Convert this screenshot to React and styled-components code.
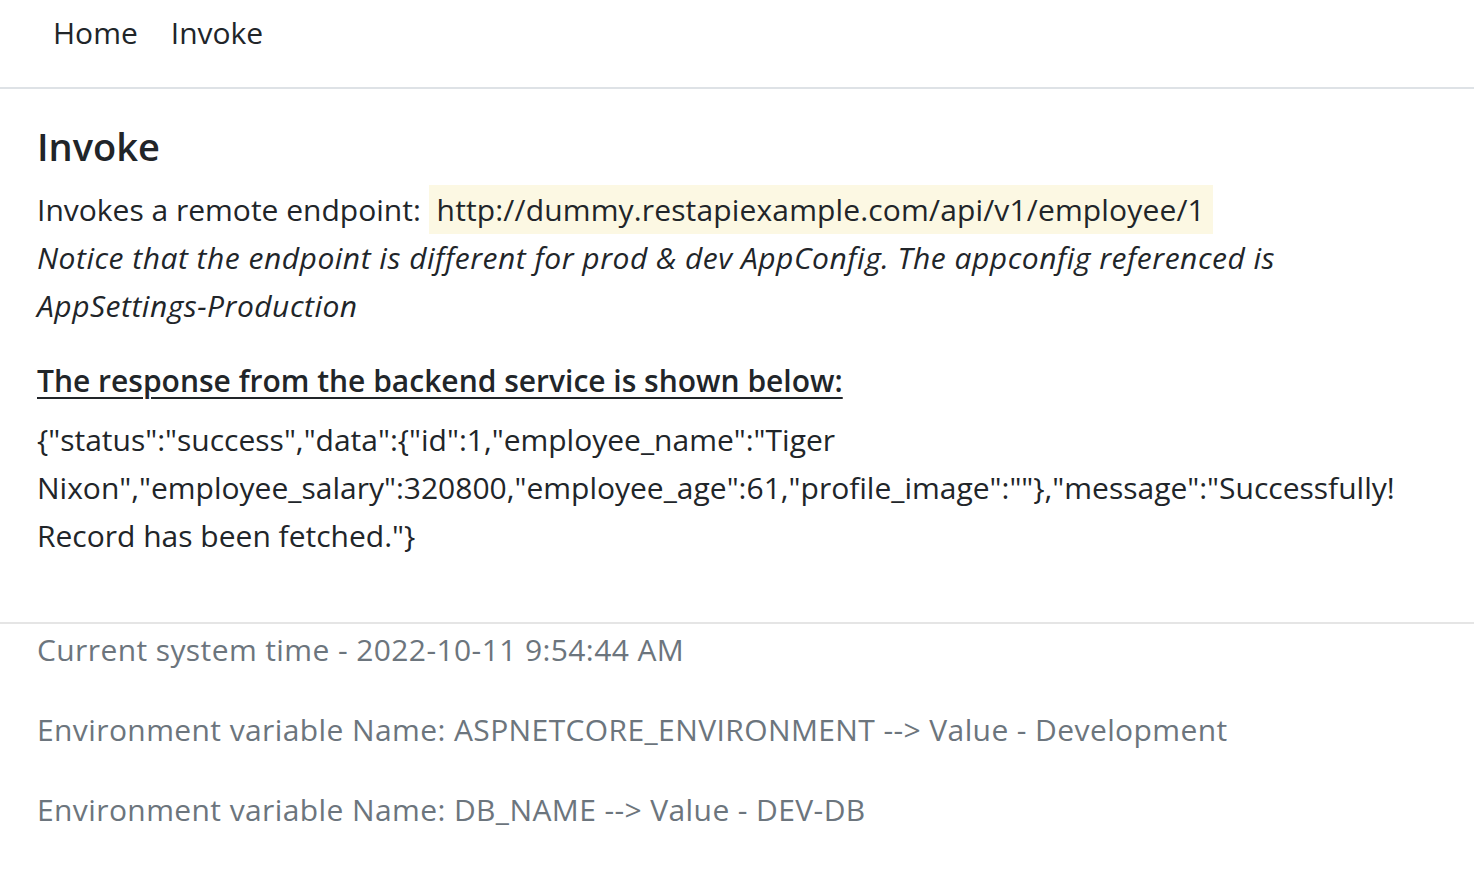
import React from 'react';
import styled, { createGlobalStyle } from 'styled-components';

const GlobalStyle = createGlobalStyle`
  html, body {
    margin: 0;
    padding: 0;
    background: #fff;
  }
  body {
    font-family: "Open Sans", "Noto Sans", sans-serif;
    font-size: 30px;
    line-height: 48px;
    color: #212529;
  }
`;

const Nav = styled.header`
  height: 89px;
  border-bottom: 2px solid #dee2e6;
  display: flex;
  align-items: flex-start;
  padding: 9px 0 0 53px;
  box-sizing: border-box;
  gap: 33px;
`;

const NavLink = styled.a`
  color: #212529;
  text-decoration: none;
  font-size: 30px;
  line-height: 48px;
`;

const Main = styled.main`
  padding: 30px 37px 62px;
`;

const Title = styled.h4`
  margin: 0 0 13px;
  font-size: 38px;
  font-weight: 600;
  line-height: 54px;
`;

const Para = styled.p`
  margin: 0 0 27px;
`;

const Mark = styled.mark`
  background: #fcf8e3;
  color: #212529;
  padding: 4px 8px;
  letter-spacing: 0.15px;
`;

const Note = styled.em`
  font-style: italic;
  letter-spacing: 0.5px;
`;

const NoWrap = styled.span`
  white-space: nowrap;
`;

const Subhead = styled.h6`
  margin: 0 0 11px;
  font-size: 30px;
  font-weight: 600;
  line-height: 48px;
  text-decoration: underline;
  text-decoration-thickness: 2px;
  text-underline-offset: 5px;
`;

const Response = styled.div`
  word-break: normal;
`;

const Footer = styled.footer`
  border-top: 2px solid #e5e5e5;
  padding: 2px 37px 0;
  color: #6c757d;
  letter-spacing: 0.4px;
  display: flex;
  flex-direction: column;
  gap: 32px;
`;

const FooterLine = styled.div``;

export default function App() {
  return (
    <>
      <GlobalStyle />
      <Nav>
        <NavLink href="#">Home</NavLink>
        <NavLink href="#">Invoke</NavLink>
      </Nav>
      <Main>
        <Title>Invoke</Title>
        <Para>
          Invokes a remote endpoint: <Mark>http://dummy.restapiexample.com/api/v1/employee/1</Mark>
          <br />
          <Note>
            Notice that the endpoint is different for prod &amp; dev AppConfig. The appconfig referenced is{' '}
            <NoWrap>AppSettings-Production</NoWrap>
          </Note>
        </Para>
        <Subhead>The response from the backend service is shown below:</Subhead>
        <Response>
          {'{"status":"success","data":{"id":1,"employee_name":"Tiger Nixon","employee_salary":320800,"employee_age":61,"profile_image":""},"message":"Successfully! Record has been fetched."}'}
        </Response>
      </Main>
      <Footer>
        <FooterLine>Current system time - 2022-10-11 9:54:44 AM</FooterLine>
        <FooterLine>Environment variable Name: ASPNETCORE_ENVIRONMENT --&gt; Value - Development</FooterLine>
        <FooterLine>Environment variable Name: DB_NAME --&gt; Value - DEV-DB</FooterLine>
      </Footer>
    </>
  );
}
